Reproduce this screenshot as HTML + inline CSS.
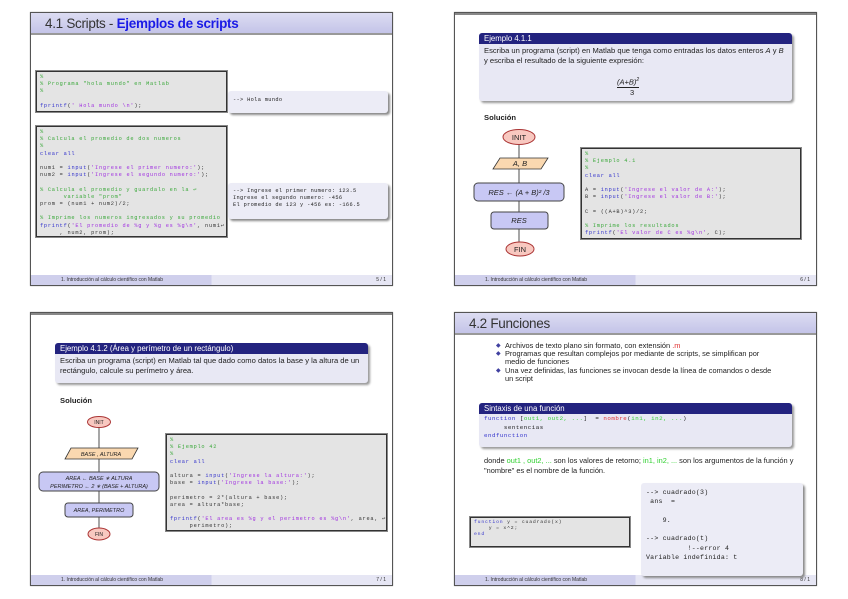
<!DOCTYPE html>
<html><head><meta charset="utf-8">
<style>
*{margin:0;padding:0;box-sizing:border-box}
body{width:848px;height:599px;background:#fff;position:relative;overflow:hidden;font-family:"Liberation Sans",sans-serif;color:#222}
.a{position:absolute}
.slide{position:absolute;border:1px solid #555;background:#fff;width:363px;height:274px;box-shadow:0 0 1px #999}
.tb{position:absolute;left:0;top:0;width:100%;height:22px;background:linear-gradient(#dcdcf2,#c4c4e8);border-bottom:2px solid #999;font-size:13.5px;letter-spacing:-0.3px;line-height:21px;padding-left:14px;color:#333}
.tb b{color:#1a1ae6}
.topline{position:absolute;left:0;top:0;width:100%;height:2px;background:#888}
.ft{position:absolute;left:0;bottom:0;width:100%;height:10px;background:linear-gradient(90deg,#cfcfec 0,#cfcfec 50%,#e6e6f4 50%);font-size:5px;line-height:10px;color:#333}
.ft span{position:absolute;left:30px}
.ft i{position:absolute;right:6px;font-style:normal}
.code{position:absolute;background:#e4e4e4;border:1px solid #333;outline:1px solid #888;font-family:"Liberation Mono",monospace;font-size:5.3px;letter-spacing:0.75px;line-height:7.2px;padding:2px 3px;white-space:pre;color:#333}
.c{color:#3aa83a}.k{color:#3333cc}.s{color:#a030e0}.r{color:#e03030}.g{color:#30d030}
.out{position:absolute;background:#ececf6;border-radius:3px;box-shadow:2px 2px 2px #888;font-family:"Liberation Mono",monospace;font-size:5.3px;letter-spacing:0.35px;line-height:7px;padding:4px 5px;white-space:pre;color:#222}
.blk{position:absolute;background:#e8e8f4;border-radius:3px;box-shadow:2px 2px 2px #999;overflow:hidden}
.blk .h{background:#23237f;color:#fff;font-size:7.8px;line-height:11px;padding-left:5px}
.blk .bd{font-size:7.6px;line-height:9.5px;padding:2px 5px;color:#222}
.t7{font-size:7.6px;line-height:9.5px;color:#222}
</style></head><body>

<!-- Slide 1 -->
<div class="slide" style="left:30px;top:12px">
  <div class="tb">4.1 Scripts - <b>Ejemplos de scripts</b></div>
  <div class="ft"><span>1. Introducción al cálculo científico con Matlab</span><i>5 / 1</i></div>
</div>
<div class="code" style="left:36px;top:71px;width:191px;height:41px"><span class="c">%
% Programa "hola mundo" en Matlab
%</span>

<span class="k">fprintf</span>(<span class="s">' Hola mundo \n'</span>);</div>
<div class="out" style="left:228px;top:91px;width:160px;height:22px;padding-top:6px">--&gt; Hola mundo</div>
<div class="code" style="left:36px;top:126px;width:191px;height:111px"><span class="c">%
% Calcula el promedio de dos numeros
%</span>
<span class="k">clear all</span>

num1 = <span class="k">input</span>(<span class="s">'Ingrese el primer numero:'</span>);
num2 = <span class="k">input</span>(<span class="s">'Ingrese el segundo numero:'</span>);

<span class="c">% Calcula el promedio y guardalo en la ↩
      variable "prom"</span>
prom = (num1 + num2)/2;

<span class="c">% Imprime los numeros ingresados y su promedio</span>
<span class="k">fprintf</span>(<span class="s">'El promedio de %g y %g es %g\n'</span>, num1↩
     , num2, prom);</div>
<div class="out" style="left:228px;top:183px;width:160px;height:36px;padding-top:5px">--&gt; Ingrese el primer numero: 123.5
Ingrese el segundo numero: -456
El promedio de 123 y -456 es: -166.5</div>

<!-- Slide 2 -->
<div class="slide" style="left:454px;top:12px">
  <div class="topline"></div>
  <div class="ft"><span>1. Introducción al cálculo científico con Matlab</span><i>6 / 1</i></div>
</div>
<div class="blk" style="left:479px;top:33px;width:313px;height:68px">
  <div class="h">Ejemplo 4.1.1</div>
  <div class="bd">Escriba un programa (script) en Matlab que tenga como entradas los datos enteros <i>A</i> y <i>B</i> y escriba el resultado de la siguiente expresión:</div>
  <div class="a" style="left:138px;top:43px;font-size:7.5px;font-style:italic;border-bottom:1px solid #222;line-height:9px">(A+B)<sup style="font-size:5px">2</sup></div>
  <div class="a" style="left:151px;top:55px;font-size:7.5px">3</div>
</div>
<div class="a t7" style="left:484px;top:113px;font-weight:bold">Solución</div>
<svg class="a" style="left:470px;top:125px" width="100" height="135">
  <g stroke="#222" stroke-width="0.8" fill="none">
    <line x1="49" y1="19" x2="49" y2="33"/><line x1="49" y1="44" x2="49" y2="58"/><line x1="49" y1="76" x2="49" y2="87"/><line x1="49" y1="104" x2="49" y2="117"/>
  </g>
  <ellipse cx="49" cy="12" rx="16" ry="7.5" fill="#f8c8c0" stroke="#a33" stroke-width="1"/>
  <polygon points="30,33 78,33 71,44 23,44" fill="#fad8b0" stroke="#333" stroke-width=".8"/>
  <rect x="4" y="58" width="90" height="18" rx="4" fill="#c8c8f4" stroke="#444" stroke-width="1"/>
  <rect x="21" y="87" width="57" height="17" rx="3" fill="#c8c8f4" stroke="#444" stroke-width="1"/>
  <ellipse cx="50" cy="124" rx="14" ry="7" fill="#f8c8c0" stroke="#a33" stroke-width="1"/>
  <g font-family="Liberation Sans" font-size="7.5" fill="#222" text-anchor="middle">
    <text x="49" y="15">INIT</text>
    <text x="50" y="41" font-style="italic">A, B</text>
    <text x="49" y="70" font-style="italic">RES ← (A + B)² /3</text>
    <text x="49" y="98" font-style="italic">RES</text>
    <text x="50" y="127">FIN</text>
  </g>
</svg>
<div class="code" style="left:581px;top:148px;width:220px;height:91px"><span class="c">%
% Ejemplo 4.1
%</span>
<span class="k">clear all</span>

A = <span class="k">input</span>(<span class="s">'Ingrese el valor de A:'</span>);
B = <span class="k">input</span>(<span class="s">'Ingrese el valor de B:'</span>);

C = ((A+B)^3)/2;

<span class="c">% Imprime los resultados</span>
<span class="k">fprintf</span>(<span class="s">'El valor de C es %g\n'</span>, C);</div>

<!-- Slide 3 -->
<div class="slide" style="left:30px;top:312px">
  <div class="topline"></div>
  <div class="ft"><span>1. Introducción al cálculo científico con Matlab</span><i>7 / 1</i></div>
</div>
<div class="blk" style="left:55px;top:343px;width:313px;height:40px">
  <div class="h">Ejemplo 4.1.2 (Área y perímetro de un rectángulo)</div>
  <div class="bd">Escriba un programa (script) en Matlab tal que dado como datos la base y la altura de un rectángulo, calcule su perímetro y área.</div>
</div>
<div class="a t7" style="left:60px;top:396px;font-weight:bold">Solución</div>
<svg class="a" style="left:36px;top:414px" width="130" height="130">
  <g stroke="#222" stroke-width="0.8"><line x1="63" y1="13" x2="63" y2="34"/><line x1="63" y1="45" x2="63" y2="58"/><line x1="63" y1="77" x2="63" y2="89"/><line x1="63" y1="103" x2="63" y2="114"/></g>
  <ellipse cx="63" cy="8" rx="11.5" ry="5.5" fill="#f8c8c0" stroke="#a33" stroke-width="1"/>
  <polygon points="35,34 102,34 96,45 29,45" fill="#fad8b0" stroke="#333" stroke-width=".8"/>
  <rect x="3" y="58" width="120" height="19" rx="4" fill="#c8c8f4" stroke="#444" stroke-width="1"/>
  <rect x="29" y="89" width="68" height="14" rx="3" fill="#c8c8f4" stroke="#444" stroke-width="1"/>
  <ellipse cx="63" cy="120" rx="11" ry="6" fill="#f8c8c0" stroke="#a33" stroke-width="1"/>
  <g font-family="Liberation Sans" font-size="5.5" fill="#222" text-anchor="middle" font-style="italic">
    <text x="63" y="10" font-style="normal" font-size="5">INIT</text>
    <text x="65" y="42">BASE , ALTURA</text>
    <text x="63" y="66">AREA  ←  BASE ∗ ALTURA</text>
    <text x="63" y="74">PERIMETRO ← 2 ∗ (BASE + ALTURA)</text>
    <text x="63" y="98">AREA, PERIMETRO</text>
    <text x="63" y="122" font-style="normal" font-size="5">FIN</text>
  </g>
</svg>
<div class="code" style="left:166px;top:434px;width:221px;height:97px"><span class="c">%
% Ejemplo 42
%</span>
<span class="k">clear all</span>

altura = <span class="k">input</span>(<span class="s">'Ingrese la altura:'</span>);
base = <span class="k">input</span>(<span class="s">'Ingrese la base:'</span>);

perimetro = 2*(altura + base);
area = altura*base;

<span class="k">fprintf</span>(<span class="s">'El area es %g y el perimetro es %g\n'</span>, area, ↩
     perimetro);</div>

<!-- Slide 4 -->
<div class="slide" style="left:454px;top:312px">
  <div class="tb">4.2 Funciones</div>
  <div class="ft"><span>1. Introducción al cálculo científico con Matlab</span><i>8 / 1</i></div>
</div>
<div class="a t7" style="left:496px;top:342px;width:282px;font-size:7.4px;line-height:8.2px">
  <div style="padding-left:9px;position:relative"><span class="a" style="left:0;color:#4040a0;font-size:6px">◆</span>Archivos de texto plano sin formato, con extensión <span class="r">.m</span></div>
  <div style="padding-left:9px;position:relative"><span class="a" style="left:0;color:#4040a0;font-size:6px">◆</span>Programas que resultan complejos por mediante de scripts, se simplifican por medio de funciones</div>
  <div style="padding-left:9px;position:relative"><span class="a" style="left:0;color:#4040a0;font-size:6px">◆</span>Una vez definidas, las funciones se invocan desde la línea de comandos o desde un script</div>
</div>
<div class="blk" style="left:479px;top:403px;width:313px;height:44px">
  <div class="h">Sintaxis de una función</div>
  <div style="font-family:'Liberation Mono',monospace;font-size:5.8px;letter-spacing:0.5px;line-height:8.5px;padding:1px 5px;white-space:pre;color:#222"><span class="k">function</span> [<span class="g">out1, out2, ...</span>]  = <span class="r">nombre</span>(<span class="g">in1, in2, ...</span>)
     sentencias
<span class="k">endfunction</span></div>
</div>
<div class="a t7" style="left:484px;top:456px;width:310px;font-size:7.4px">donde <span class="g">out1 , out2, ...</span> son los valores de retorno; <span class="g">in1, in2, ...</span> son los argumentos de la función y "nombre" es el nombre de la función.</div>
<div class="out" style="left:641px;top:483px;width:162px;height:93px;font-size:6.6px;letter-spacing:0.2px;line-height:9.3px;padding:5px 5px">--&gt; cuadrado(3)
 ans  =

    9.

--&gt; cuadrado(t)
          !--error 4
Variable indefinida: t</div>
<div class="code" style="left:470px;top:517px;width:160px;height:30px;font-size:4.8px;letter-spacing:0.8px;line-height:6px"><span class="k">function</span> y = cuadrado(x)
    y = x^2;
<span class="k">end</span></div>

</body></html>
